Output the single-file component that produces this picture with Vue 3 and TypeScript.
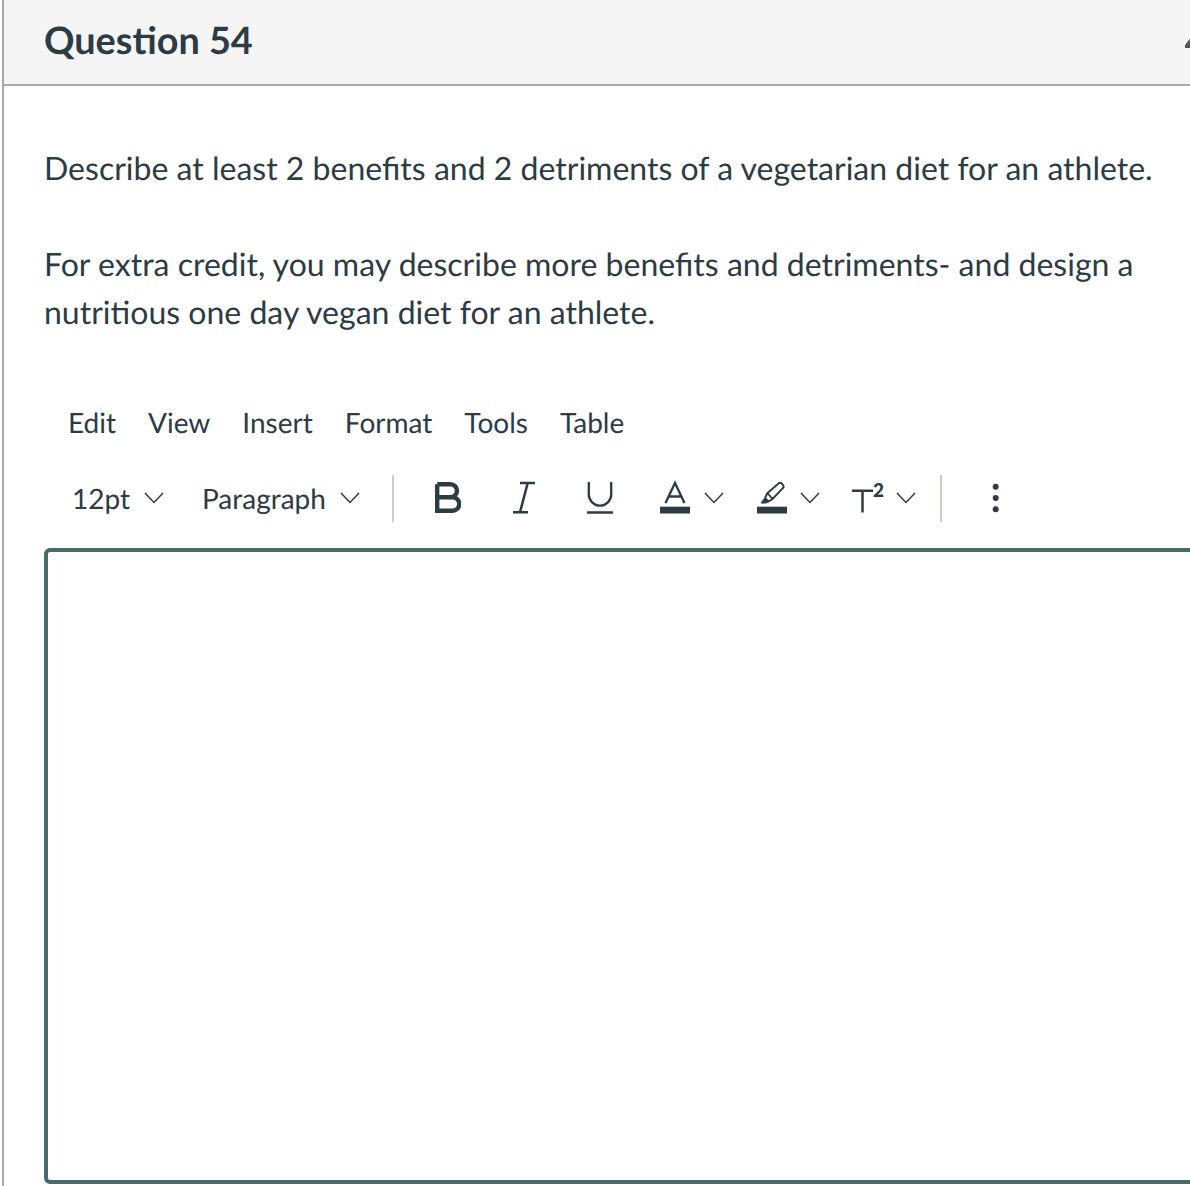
<script setup lang="ts">
const menus: string[] = ['Edit', 'View', 'Insert', 'Format', 'Tools', 'Table']
</script>

<template>
  <div class="page">
    <section class="card">
      <header class="head">
        <h2 class="title">Question 54</h2>
        <svg class="caret" width="20" height="14" viewBox="0 0 20 14"><path d="M0 10 5 3 10 10Z" fill="#555" stroke="#555" stroke-width="2" stroke-linejoin="round" /></svg>
      </header>
      <div class="body">
        <p class="q first">Describe at least 2 benefits and 2 detriments of a vegetarian diet for an athlete.</p>
        <p class="q second">For extra credit, you may describe more benefits and detriments- and design a nutritious one day vegan diet for an athlete.</p>
        <nav class="menu">
          <span v-for="m in menus" :key="m">{{ m }}</span>
        </nav>
        <div class="tools">
          <span class="label size">12pt</span>
          <svg class="chev c-size" width="20" height="48" viewBox="0 0 20 48"><path d="M1 19 10 28.500 19 19" /></svg>
          <span class="label para">Paragraph</span>
          <svg class="chev c-para" width="20" height="48" viewBox="0 0 20 48"><path d="M1 19 10 28.500 19 19" /></svg>
          <i class="sep s1"></i>
          <svg class="ic b" width="26" height="48" viewBox="0 0 26 48"><path d="M2.200 10.200V36.800H17.500a6.500 6.500 0 0 0 0-13.600H2.200M2.200 23.200H15.500a6.500 6.500 0 0 0 0-13H2.200" fill="none" stroke="#2d3b45" stroke-width="4.400" /></svg>
          <svg class="ic it" width="22" height="48" viewBox="0 0 22 48"><path d="M7 9H22M0 38.300H15M14.700 9 7 38.300" fill="none" stroke="#2d3b45" stroke-width="2.500" /></svg>
          <svg class="ic u" width="26" height="48" viewBox="0 0 26 48"><path d="M1.800 8V20.500a11.200 11.200 0 0 0 22.400 0V8M0 38.500H26" fill="none" stroke="#2d3b45" stroke-width="2.300" /></svg>
          <svg class="ic a" width="30" height="48" viewBox="0 0 30 48"><path d="M5.500 29 15 9 24.500 29M8.500 22.500H21.500" fill="none" stroke="#2d3b45" stroke-width="2.300" /><rect y="32.700" width="30" height="6.800" fill="#2d3b45" /></svg>
          <svg class="chev c-a" width="20" height="48" viewBox="0 0 20 48"><path d="M1 19 10 28.500 19 19" /></svg>
          <svg class="ic hl" width="30" height="48" viewBox="0 0 30 48"><path d="M10.500 19 21.500 9.500a2.500 2.500 0 0 1 3.500.2l1 1.300a2.500 2.500 0 0 1-.4 3.400L15.500 25ZM10.500 19 8 24 11.500 27.500 15.500 25" fill="none" stroke="#2d3b45" stroke-width="1.900" stroke-linejoin="round" /><path d="M7.500 24.500 11 28 9 29H4Z" fill="#2d3b45" stroke="#2d3b45" stroke-width="1" stroke-linejoin="round" /><rect y="32.700" width="30" height="6.800" fill="#2d3b45" /></svg>
          <svg class="chev c-hl" width="20" height="48" viewBox="0 0 20 48"><path d="M1 19 10 28.500 19 19" /></svg>
          <span class="sup">
            <svg width="22" height="48" viewBox="0 0 22 48"><path d="M0 16.700H21M10.500 16.700V38.500" fill="none" stroke="#2d3b45" stroke-width="2.500" /></svg>
            <span class="two">2</span>
          </span>
          <svg class="chev c-t" width="20" height="48" viewBox="0 0 20 48"><path d="M1 19 10 28.500 19 19" /></svg>
          <i class="sep s2"></i>
          <svg class="ic dots" width="8" height="48" viewBox="0 0 8 48"><circle cx="3.700" cy="12.700" r="3" /><circle cx="3.700" cy="24" r="3" /><circle cx="3.700" cy="35.300" r="3" /></svg>
        </div>
        <div class="editor"></div>
      </div>
    </section>
  </div>
</template>

<style scoped>
.page {
  width: 1190px;
  height: 1186px;
  overflow: hidden;
  background: #fff;
  font-family: Lato, "Open Sans", sans-serif;
  color: #2d3b45;
  text-rendering: geometricPrecision;
}
.card {
  width: 1220px;
  height: 1186px;
  margin-left: 2px;
  border-left: 2px solid #a9a9a9;
  box-sizing: border-box;
}
.head {
  height: 86px;
  box-sizing: border-box;
  padding: 0 17px 0 40px;
  background: #f5f5f5;
  border-bottom: 2px solid #a9a9a9;
  display: flex;
  align-items: center;
  justify-content: space-between;
}
.title {
  margin: 0 0 2px;
  font-size: 37.800px;
  font-weight: 700;
  line-height: 76px;
}
.caret {
  margin-top: 4px;
}
.body {
  padding-left: 40px;
}
.q {
  margin: 0;
  font-size: 32.030px;
  line-height: 48px;
}
.first {
  padding-top: 58px;
}
.second {
  margin-top: 48px;
  width: 1110px;
}
.menu {
  display: flex;
  gap: 32px;
  margin-top: 62px;
  padding-left: 24px;
  font-size: 28px;
  line-height: 48px;
}
.tools {
  display: flex;
  align-items: center;
  height: 48px;
  margin-top: 28px;
  font-size: 28px;
}
.label {
  flex: none;
  line-height: 48px;
}
.size {
  width: 57px;
  margin-left: 28px;
}
.c-size {
  margin-left: 15px;
}
.para {
  width: 123px;
  margin-left: 38px;
}
.c-para {
  margin-left: 15px;
}
.chev {
  flex: none;
}
.chev path {
  fill: none;
  stroke: #2d3b45;
  stroke-width: 1.500;
}
.sep {
  flex: none;
  align-self: flex-end;
  width: 2px;
  height: 47px;
  background: #c7cdd1;
}
.s1 {
  margin-left: 32px;
}
.ic {
  flex: none;
}
.b {
  margin-left: 41px;
}
.it {
  margin-left: 52px;
}
.u {
  margin-left: 52px;
}
.a {
  margin-left: 47px;
}
.c-a {
  margin-left: 14px;
}
.hl {
  margin-left: 33px;
}
.c-hl {
  margin-left: 13px;
}
.sup {
  position: relative;
  flex: none;
  width: 33px;
  height: 48px;
  margin-left: 32px;
}
.two {
  position: absolute;
  left: 21px;
  top: 7px;
  font-size: 19px;
  line-height: 19px;
  font-weight: 900;
}
.c-t {
  margin-left: 11px;
}
.s2 {
  margin-left: 24px;
}
.dots {
  margin-left: 50px;
}
.dots circle {
  fill: #2d3b45;
}
.editor {
  width: 1240px;
  height: 636px;
  margin-top: 26px;
  box-sizing: border-box;
  border: 4px solid #456b6b;
  border-radius: 6px;
}
</style>
